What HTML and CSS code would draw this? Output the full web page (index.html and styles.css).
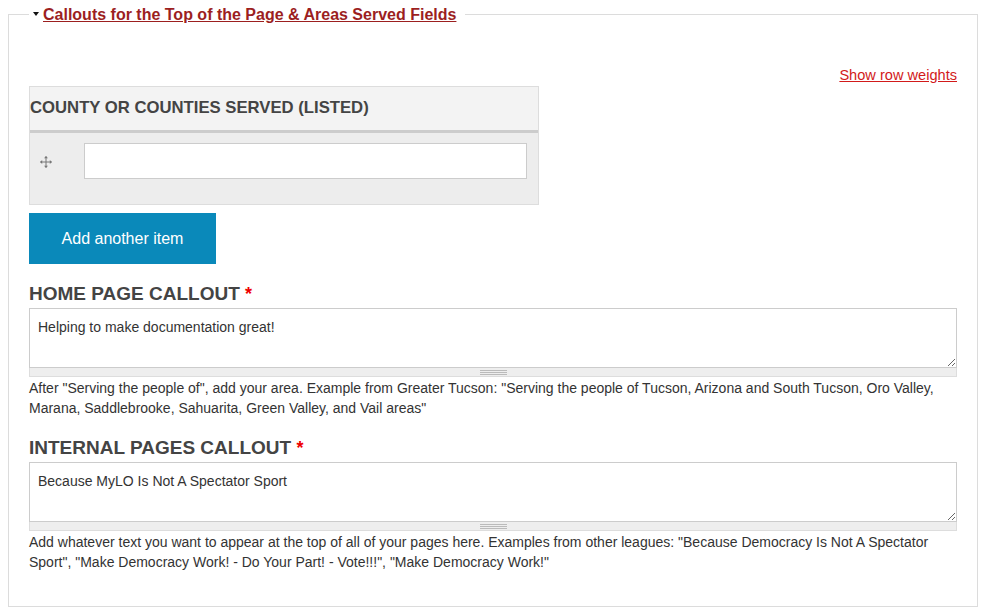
FILE: index.html
```html
<!DOCTYPE html>
<html>
<head>
<meta charset="utf-8">
<link rel="stylesheet" href="styles.css">
</head>
<body>
<div class="page">
  <fieldset class="group">
    <legend class="group-legend"><span class="caret"></span><a href="#" class="legend-link">Callouts for the Top of the Page &amp; Areas Served Fields</a></legend>

    <div class="toggle-row"><a href="#" class="toggle-link">Show row weights</a></div>

    <div class="multi-table">
      <div class="multi-head">COUNTY OR COUNTIES SERVED (LISTED)</div>
      <div class="multi-row">
        <span class="handle">
          <svg width="12" height="12" viewBox="0 0 12 12" aria-hidden="true">
            <g fill="none" stroke="#777" stroke-width="1">
              <path d="M6 0.5v11M0.5 6h11"/>
            </g>
            <g fill="#777">
              <path d="M6 0l2 2.2H4z"/>
              <path d="M6 12l2-2.2H4z"/>
              <path d="M0 6l2.2-2v4z"/>
              <path d="M12 6l-2.2-2v4z"/>
            </g>
          </svg>
        </span>
        <input type="text" class="text-input">
      </div>
    </div>

    <button type="button" class="add-btn">Add another item</button>

    <div class="field">
      <label class="field-label">HOME PAGE CALLOUT <span class="req">*</span></label>
      <div class="ta-wrap">
        <textarea class="ta">Helping to make documentation great!</textarea>
        <div class="grippie"><span class="grip-lines"></span></div>
      </div>
      <div class="desc">After "Serving the people of", add your area. Example from Greater Tucson: "Serving the people of Tucson, Arizona and South Tucson, Oro Valley, Marana, Saddlebrooke, Sahuarita, Green Valley, and Vail areas"</div>
    </div>

    <div class="field">
      <label class="field-label">INTERNAL PAGES CALLOUT <span class="req">*</span></label>
      <div class="ta-wrap">
        <textarea class="ta">Because MyLO Is Not A Spectator Sport</textarea>
        <div class="grippie"><span class="grip-lines"></span></div>
      </div>
      <div class="desc">Add whatever text you want to appear at the top of all of your pages here. Examples from other leagues: "Because Democracy Is Not A Spectator Sport", "Make Democracy Work! - Do Your Part! - Vote!!!", "Make Democracy Work!"</div>
    </div>
  </fieldset>
</div>
</body>
</html>
```

FILE: styles.css
```css
html, body {
  margin: 0;
  padding: 0;
  background: #fff;
}

body {
  font-family: "Liberation Sans", Arial, Helvetica, sans-serif;
  color: #333;
  font-size: 14px;
}

.page {
  padding: 5px 12px 9px 8px;
}

.group {
  margin: 0;
  border: 1px solid #dcdcdc;
  padding: 0 20px 34px 20px;
  min-width: 0;
}

.group-legend {
  padding: 0 9px 0 4px;
  margin-left: 0;
  font-size: 16px;
  font-weight: bold;
  line-height: 19px;
}

.caret {
  display: inline-block;
  width: 0;
  height: 0;
  border-left: 3.5px solid transparent;
  border-right: 3.5px solid transparent;
  border-top: 4px solid #111;
  vertical-align: middle;
  margin-right: 4px;
  position: relative;
  top: -2px;
}

.legend-link {
  color: #9c1f1f;
  text-decoration: underline;
}

.toggle-row {
  text-align: right;
  margin-top: 41px;
  line-height: 20px;
  height: 20px;
}

.toggle-link {
  color: #d21a1a;
  font-size: 14.6px;
  text-decoration: underline;
}

.multi-table {
  width: 510px;
  margin-top: 1px;
  border: 1px solid #ddd;
  box-sizing: border-box;
}

.multi-head {
  background: #f3f3f3;
  height: 46px;
  line-height: 41px;
  padding-left: 0;
  font-size: 16.7px;
  font-weight: bold;
  color: #444;
  border-bottom: 3px solid #ccc;
  box-sizing: border-box;
}

.multi-row {
  background: #ededed;
  display: flex;
  align-items: flex-start;
  height: 71px;
  padding: 10px 0 0 0;
  box-sizing: border-box;
}

.handle {
  width: 54px;
  display: flex;
  justify-content: center;
  padding-top: 13px;
}

.handle svg {
  margin-left: -23px;
}

.text-input {
  margin: 0;
  width: 443px;
  height: 36px;
  box-sizing: border-box;
  border: 1px solid #ccc;
  background: #fff;
  padding: 4px 8px;
  font-family: inherit;
  font-size: 14px;
}

.add-btn {
  display: block;
  margin-top: 8px;
  width: 187px;
  height: 51px;
  border: 0;
  background: #0a89ba;
  color: #fff;
  font-family: "Liberation Sans", Arial, sans-serif;
  font-size: 16px;
  padding: 0;
  cursor: pointer;
}

.field {
  margin-top: 18px;
}

.field-label {
  display: block;
  font-size: 19px;
  font-weight: bold;
  line-height: 24px;
  height: 24px;
  color: #444;
  margin-bottom: 2px;
}

.req {
  color: #e00;
  font-size: 18px;
  line-height: 0;
}

.ta-wrap {
  width: 100%;
}

.ta {
  display: block;
  width: 100%;
  height: 60px;
  box-sizing: border-box;
  margin: 0;
  border: 1px solid #ccc;
  padding: 9px 8px;
  font-family: "Liberation Sans", Arial, sans-serif;
  font-size: 14px;
  line-height: 18px;
  color: #333;
  resize: vertical;
}

.grippie {
  height: 9px;
  background: #eee;
  border: 1px solid #ddd;
  border-top: 0;
  box-sizing: border-box;
  display: flex;
  justify-content: center;
  align-items: center;
}

.grip-lines {
  display: block;
  width: 27px;
  height: 5px;
  border-top: 1px solid #bbb;
  border-bottom: 1px solid #bbb;
  box-sizing: border-box;
  background: linear-gradient(#bbb, #bbb) center / 100% 1px no-repeat;
}

.desc {
  margin-top: 1px;
  font-size: 14px;
  line-height: 20px;
  color: #333;
}
```
